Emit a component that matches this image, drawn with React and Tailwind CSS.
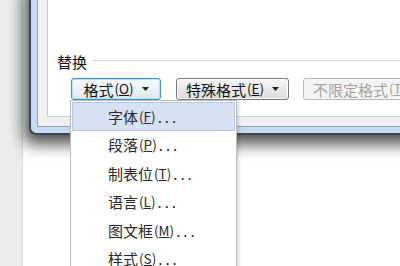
import React from 'react'

const font = { fontFamily: '"Noto Sans CJK SC", "Noto Sans", sans-serif' }

const Caret = () => (
  <svg width="7" height="4" viewBox="0 0 7 4" className="ml-[8px]">
    <path d="M0 0 L7 0 L3.5 4 Z" fill="#1e1e1e" />
  </svg>
)

const Key = ({ k }) => (
  <span className="text-[13.5px] ml-[1px]">(<span className="underline">{k}</span>)</span>
)

const menuItems = [
  { label: '字体', key: 'F', active: true },
  { label: '段落', key: 'P' },
  { label: '制表位', key: 'T' },
  { label: '语言', key: 'L' },
  { label: '图文框', key: 'M' },
  { label: '样式', key: 'S' },
]

export default function App() {
  return (
    <div className="relative w-[400px] h-[266px] overflow-hidden bg-white" style={font}>
      {/* desktop behind the dialog */}
      <div className="flex h-full">
        <div className="w-[23px] h-full bg-[#ececec] border-r border-[#dadada]" />
        <div className="flex-1 bg-white" />
      </div>

      {/* dialog window */}
      <div className="absolute left-[29px] top-[-20px] w-[420px] h-[155px] rounded-bl-[7px] border-2 border-r-0 border-[#3f4651] bg-[#c3daf0] p-[6px] pr-0 shadow-[-5px_9px_16px_rgba(0,0,0,0.7)]">
        <div className="h-full border border-r-0 border-[#8ea4bc] bg-[#f0f0f0] pl-[9px] pb-[9px]">
          <div className="h-full border border-r-0 border-[#cacaca] bg-white flex flex-col justify-end pl-[9px] pb-[16px]">
            <div className="flex items-center h-[16px]">
              <span className="text-[15px] leading-none text-[#111]">替换</span>
              <div className="flex-1 ml-[6px] border-t border-[#d5d5d5] border-b border-b-white" />
            </div>
            <div className="flex items-center mt-[9px] ml-[14px] gap-[15px] text-[15px] leading-none text-[#111]">
              <button className="flex items-center justify-center w-[90px] h-[22px] rounded-[3px] border border-[#3c95cf] bg-gradient-to-b from-[#f4f9fc] to-[#dfe9f0] shadow-[inset_0_0_0_1px_#b9e0f5]">
                格式<Key k="O" /><Caret />
              </button>
              <button className="flex items-center justify-center w-[113px] h-[22px] rounded-[3px] border border-[#7a7a7a] bg-gradient-to-b from-[#f6f6f6] to-[#dcdcdc] shadow-[inset_0_0_0_1px_#fcfcfc]">
                特殊格式<Key k="E" /><Caret />
              </button>
              <button className="flex items-center justify-start pl-[9px] w-[118px] h-[22px] rounded-[3px] border border-[#b4b9bd] bg-[#f4f4f4] text-[#a3a3a3] ml-[-1px]">
                不限定格式<Key k="T" />
              </button>
            </div>
          </div>
        </div>
      </div>

      {/* dropdown menu */}
      <div className="absolute left-[70px] top-[100px] w-[167px] h-[180px] bg-white border border-[#bdbdbd] p-[1px] shadow-[2px_2px_3px_rgba(0,0,0,0.15)]">
        {menuItems.map(item => (
          <div
            key={item.key}
            className={`flex items-center h-[28.5px] pl-[35px] text-[15px] leading-none text-[#2a2a2a] ${
              item.active ? 'bg-[#d7e1f3] border border-[#b7c9e6]' : 'border border-transparent'
            }`}
          >
            {item.label}
            <Key k={item.key} />
            <span className="tracking-[3px] ml-[2px]">...</span>
          </div>
        ))}
      </div>
    </div>
  )
}
